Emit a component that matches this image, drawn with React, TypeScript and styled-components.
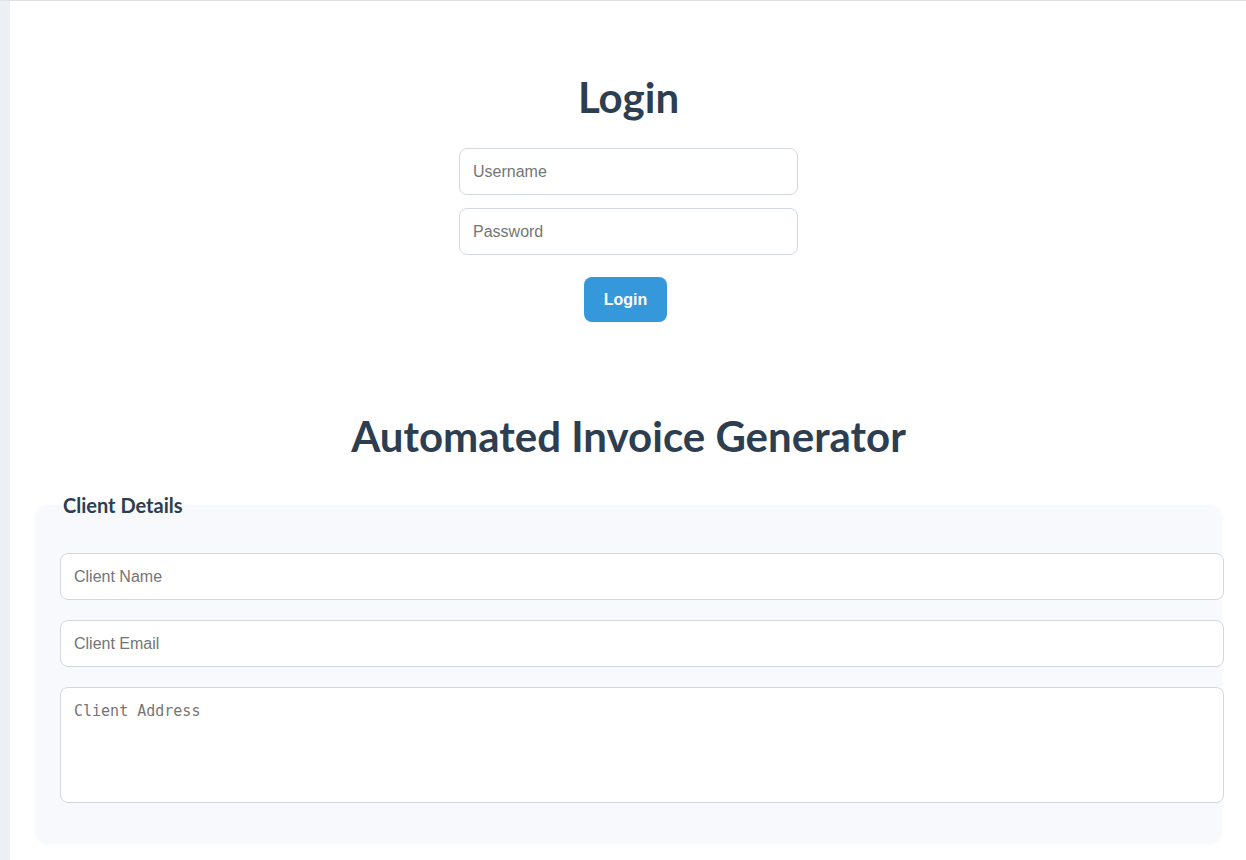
import React from "react";
import styled, { createGlobalStyle } from "styled-components";

const GlobalStyle = createGlobalStyle`
  html, body {
    margin: 0;
    padding: 0;
    background: #eceff4;
  }
  body {
    font-family: "Lato", "Liberation Sans", sans-serif;
    color: #2c3e50;
  }
  #root {
    border-top: 1px solid #dfe1e5;
  }
`;

const Page = styled.main`
  margin-left: 10px;
  background: #ffffff;
  min-height: 859px;
  padding: 72px 25px 0 26px;
  box-sizing: border-box;
  display: flex;
  flex-direction: column;
`;

const Title = styled.h2`
  margin: 0;
  font-family: "Lato", "Liberation Sans", sans-serif;
  font-weight: 700;
  font-size: 42px;
  line-height: 48px;
  text-align: center;
  color: #2c3e50;
`;

const LoginSection = styled.section`
  display: flex;
  flex-direction: column;
  align-items: center;
`;

const LoginForm = styled.form`
  display: flex;
  flex-direction: column;
  align-items: center;
  gap: 13px;
  margin-top: 27px;
`;

const TextInput = styled.input<{ $wide?: boolean }>`
  display: block;
  box-sizing: ${(p) => (p.$wide ? "content-box" : "border-box")};
  width: ${(p) => (p.$wide ? "100%" : "339px")};
  height: ${(p) => (p.$wide ? "45px" : "47px")};
  padding: ${(p) => (p.$wide ? "0 12px 0 13px" : "0 13px")};
  margin: 0;
  border: 1px solid #d3d8e0;
  border-radius: 8px;
  background: #ffffff;
  font-family: "Liberation Sans", Arial, sans-serif;
  font-size: 16px;
  color: #2c3e50;
  outline: none;
  &::placeholder {
    color: #757575;
  }
`;

const Button = styled.button`
  margin: 9px 6px 0 0;
  width: 83px;
  height: 45px;
  border: none;
  border-radius: 8px;
  background: #3498db;
  color: #ffffff;
  font-family: "Liberation Sans", Arial, sans-serif;
  font-weight: 700;
  font-size: 16px;
  cursor: pointer;
`;

const InvoiceSection = styled.section`
  margin-top: 90px;
  display: flex;
  flex-direction: column;
`;

const Fieldset = styled.fieldset`
  margin: 33px 0 0 0;
  padding: 36px 24px 24px 24px;
  border: none;
  border-radius: 12px;
  background: #f8f9fd;
  box-shadow: 0 1px 4px rgba(44, 62, 80, 0.06);
  min-width: 0;
`;

const Legend = styled.legend`
  padding: 0 3px;
  font-family: "Lato", "Liberation Sans", sans-serif;
  font-weight: 700;
  font-size: 20px;
  color: #2c3e50;
`;

const Field = styled.div`
  margin-bottom: 20px;
`;

const TextArea = styled.textarea`
  box-sizing: content-box;
  width: 100%;
  height: 100px;
  padding: 13px 12px 1px 13px;
  margin: 0 0 15px 0;
  border: 1px solid #d3d8e0;
  border-radius: 8px;
  background: #ffffff;
  font-family: "DejaVu Sans Mono", "Liberation Mono", monospace;
  font-size: 15px;
  line-height: 20px;
  color: #2c3e50;
  resize: none;
  outline: none;
  display: block;
  &::placeholder {
    color: #757575;
  }
`;

export default function App() {
  return (
    <>
      <GlobalStyle />
      <Page>
        <LoginSection>
          <Title>Login</Title>
          <LoginForm onSubmit={(e) => e.preventDefault()}>
            <TextInput type="text" placeholder="Username" />
            <TextInput type="password" placeholder="Password" />
            <Button type="submit">Login</Button>
          </LoginForm>
        </LoginSection>
        <InvoiceSection>
          <Title>Automated Invoice Generator</Title>
          <Fieldset>
            <Legend>Client Details</Legend>
            <Field>
              <TextInput $wide type="text" placeholder="Client Name" />
            </Field>
            <Field>
              <TextInput $wide type="email" placeholder="Client Email" />
            </Field>
            <TextArea placeholder="Client Address" />
          </Fieldset>
        </InvoiceSection>
      </Page>
    </>
  );
}
